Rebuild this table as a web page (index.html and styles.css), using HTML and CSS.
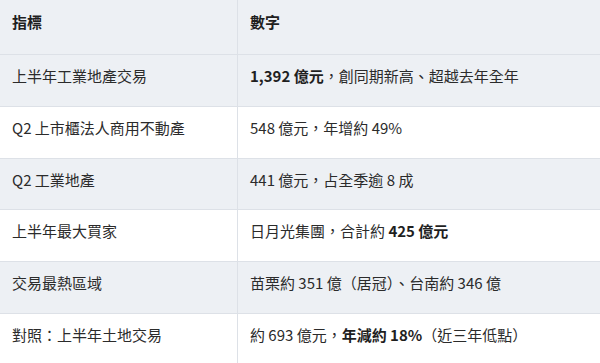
FILE: index.html
```html
<!DOCTYPE html>
<html lang="zh-Hant">
<head>
<meta charset="utf-8">
<link rel="stylesheet" href="styles.css">
</head>
<body>
<table class="data">
  <thead>
    <tr><th class="c1">指標</th><th>數字</th></tr>
  </thead>
  <tbody>
    <tr class="alt"><td class="c1">上半年工業地產交易</td><td><b>1,392 億元</b>，創同期新高、超越去年全年</td></tr>
    <tr><td class="c1">Q2 上市櫃法人商用不動產</td><td>548 億元，年增約 49%</td></tr>
    <tr class="alt"><td class="c1">Q2 工業地產</td><td>441 億元，占全季逾 8 成</td></tr>
    <tr><td class="c1">上半年最大買家</td><td>日月光集團，合計約 <b>425 億元</b></td></tr>
    <tr class="alt"><td class="c1">交易最熱區域</td><td>苗栗約 351 億（居冠）、台南約 346 億</td></tr>
    <tr><td class="c1">對照：上半年土地交易</td><td>約 693 億元，<b>年減約 18%</b>（近三年低點）</td></tr>
  </tbody>
</table>
</body>
</html>
```
FILE: styles.css
```css
html, body {
  margin: 0;
  padding: 0;
  background: #ffffff;
}
body {
  font-family: "Noto Sans CJK TC", "Noto Sans", sans-serif;
  font-size: 15px;
  color: #2b2b2b;
}
.data {
  width: 600px;
  border-collapse: collapse;
  table-layout: fixed;
}
.data th,
.data td {
  text-align: left;
  vertical-align: top;
  padding: 10px 12px 18.8px;
  line-height: 22px;
  height: 22px;
  border-bottom: 1px solid #dde1e7;
}
.data .c1 {
  width: 213px;
  border-right: 1px solid #dde1e7;
}
.data th {
  font-weight: 700;
  color: #1f1f1f;
  background: #edf0f4;
  padding-top: 11px;
  padding-bottom: 21px;
}
.data tr.alt td {
  background: #edf0f4;
}
.data b {
  font-weight: 700;
  color: #1f1f1f;
}
```
